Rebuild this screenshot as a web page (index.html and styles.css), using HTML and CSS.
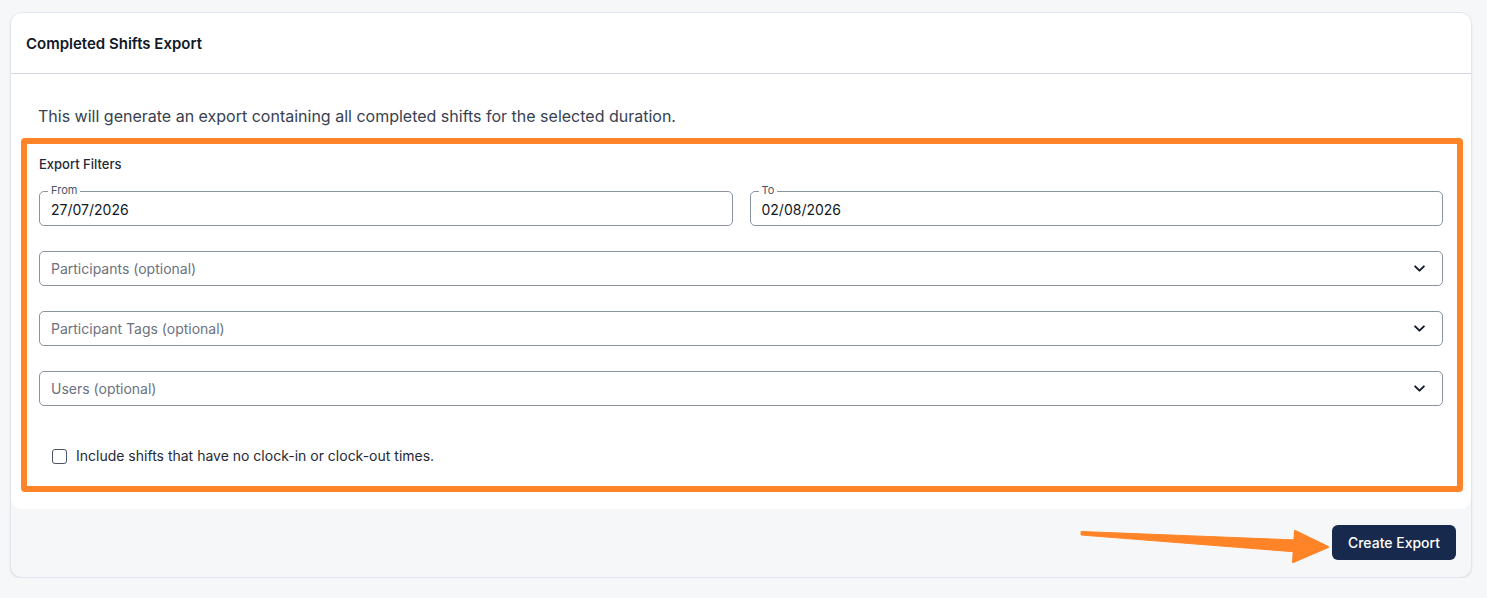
FILE: index.html
```html
<!DOCTYPE html>
<html lang="en">
<head>
    <meta charset="UTF-8">
    <meta name="viewport" content="width=device-width, initial-scale=1.0">
    <title>Completed Shifts Export</title>
    <link rel="stylesheet" href="styles.css">
</head>
<body>
    <div class="card">
        <div class="card-header">
            <h2>Completed Shifts Export</h2>
        </div>
        <div class="card-body">
            <p class="intro">This will generate an export containing all completed shifts for the selected duration.</p>
            <div class="filters">
                <h3>Export Filters</h3>
                <div class="date-row">
                    <div class="field">
                        <span class="field-label">From</span>
                        <input type="text" value="27/07/2026">
                    </div>
                    <div class="field">
                        <span class="field-label">To</span>
                        <input type="text" value="02/08/2026">
                    </div>
                </div>
                <div class="select">
                    <span>Participants (optional)</span>
                    <svg width="15" height="15" viewBox="0 0 24 24"><path d="M5 8.5l7 7 7-7" fill="none" stroke="#111827" stroke-width="3" stroke-linecap="round" stroke-linejoin="round"/></svg>
                </div>
                <div class="select">
                    <span>Participant Tags (optional)</span>
                    <svg width="15" height="15" viewBox="0 0 24 24"><path d="M5 8.5l7 7 7-7" fill="none" stroke="#111827" stroke-width="3" stroke-linecap="round" stroke-linejoin="round"/></svg>
                </div>
                <div class="select">
                    <span>Users (optional)</span>
                    <svg width="15" height="15" viewBox="0 0 24 24"><path d="M5 8.5l7 7 7-7" fill="none" stroke="#111827" stroke-width="3" stroke-linecap="round" stroke-linejoin="round"/></svg>
                </div>
                <label class="check">
                    <span class="box"></span>
                    Include shifts that have no clock-in or clock-out times.
                </label>
            </div>
        </div>
        <div class="card-footer">
            <button class="primary">Create Export</button>
        </div>
    </div>

    <!-- annotation arrow -->
    <svg class="arrow" width="1487" height="598" viewBox="0 0 1487 598">
        <polygon points="1081,531.5 1297,540 1297,552 1081,535" fill="#ff8427" stroke="#ff8427" stroke-width="1" stroke-linejoin="round"/>
        <polygon points="1295,531 1328,547 1293,562" fill="#ff8427" stroke="#ff8427" stroke-width="2" stroke-linejoin="round"/>
    </svg>
</body>
</html>
```

FILE: styles.css
```css
body {
    margin: 0;
    padding: 12px 15px 0 10px;
    background-color: #f6f7f9;
    font-family: Inter, "Noto Sans", sans-serif;
    color: #111827;
}
.card {
    background-color: #f6f7f9;
    border: 1px solid #e2e5ed;
    border-radius: 12px;
    box-shadow: 0 1px 2px rgba(0, 0, 0, 0.08);
    overflow: hidden;
}
.card-header {
    background-color: #fff;
    height: 60px;
    display: flex;
    align-items: center;
    padding: 0 15px;
    border-bottom: 1px solid #d3d6dc;
}
.card-header h2 {
    margin: 0;
    font-size: 15px;
    font-weight: 600;
    color: #111827;
}
.card-body {
    background-color: #fff;
    padding: 30px 8px 17px 10px;
    border-radius: 0 0 11px 11px;
}
.intro {
    margin: 0 0 10px 17px;
    font-size: 16px;
    line-height: 24px;
    color: #374151;
}
.filters {
    border: 6px solid #ff8427;
    border-radius: 4px;
    padding: 11px 14px 20px 12px;
}
.filters h3 {
    margin: 0 0 18px;
    font-size: 13px;
    line-height: 18px;
    font-weight: 500;
    color: #1f2937;
}
.date-row {
    display: grid;
    grid-template-columns: 1fr 1fr;
    gap: 17px;
    margin-bottom: 25px;
}
.field {
    position: relative;
}
.field-label {
    position: absolute;
    top: -7px;
    left: 9px;
    padding: 0 3px;
    background-color: #fff;
    font-size: 11px;
    line-height: 13px;
    color: #4b5563;
}
.field input {
    box-sizing: border-box;
    width: 100%;
    height: 35px;
    border: 1px solid #8c93a0;
    border-radius: 5px;
    padding: 1px 11px 0;
    font-family: inherit;
    font-size: 14px;
    color: #111827;
    outline: none;
}
.select {
    box-sizing: border-box;
    height: 35px;
    border: 1px solid #8c93a0;
    border-radius: 5px;
    padding: 0 15px 0 11px;
    display: flex;
    align-items: center;
    justify-content: space-between;
    margin-bottom: 25px;
    font-size: 14px;
    color: #6b7280;
}
.check {
    display: flex;
    align-items: center;
    gap: 9px;
    margin: 40px 0 0 13px;
    font-size: 14px;
    line-height: 20px;
    color: #1f2937;
}
.box {
    box-sizing: border-box;
    width: 15px;
    height: 15px;
    border: 1.5px solid #4b5563;
    border-radius: 3px;
}
.card-footer {
    display: flex;
    justify-content: flex-end;
    padding: 16px 15px 17px;
}
.primary {
    height: 35px;
    padding: 0 16px;
    border: none;
    border-radius: 6px;
    background-color: #172a4d;
    color: #fff;
    font-family: inherit;
    font-size: 14px;
    font-weight: 500;
}
.arrow {
    position: absolute;
    top: 0;
    left: 0;
    pointer-events: none;
}
```
